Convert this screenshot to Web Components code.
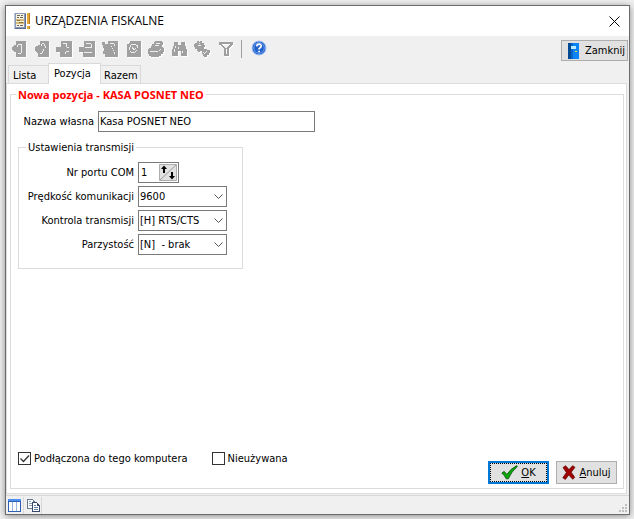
<!DOCTYPE html>
<html lang="pl">
<head>
<meta charset="utf-8">
<title>Urządzenia fiskalne</title>
<style>
html {
  background: #f1f1f1;
}
body {
  display: flex;
  min-height: 100vh;
  box-sizing: border-box;
  margin: 0;
  padding: 5px 4px 4px 5px;
  font: 11px/13px "DejaVu Sans Condensed", "DejaVu Sans", sans-serif;
  color: #000;
}
</style>
</head>
<body>
<fiscal-window heading="URZĄDZENIA FISKALNE">
  <tool-bar slot="tools"></tool-bar>
  <tab-pages slot="main" tabs="Lista,Pozycja,Razem" active="1">
    <group-box heading="Nowa pozycja - KASA POSNET NEO" main>
      <text-field label="Nazwa własna" value="Kasa POSNET NEO"></text-field>
      <group-box heading="Ustawienia transmisji">
        <spin-field label="Nr portu COM" value="1"></spin-field>
        <combo-field label="Prędkość komunikacji" value="9600"></combo-field>
        <combo-field label="Kontrola transmisji" value="[H] RTS/CTS"></combo-field>
        <combo-field label="Parzystość" value="[N]&nbsp; - brak"></combo-field>
      </group-box>
      <form-footer>
        <check-field label="Podłączona do tego komputera" checked></check-field>
        <check-field label="Nieużywana"></check-field>
        <push-button slot="actions" icon="ok" primary><u>O</u>K</push-button>
        <push-button slot="actions" icon="cancel"><u>A</u>nuluj</push-button>
      </form-footer>
    </group-box>
  </tab-pages>
  <status-bar slot="status"></status-bar>
</fiscal-window>

<script>
const icons = {
  app: `<svg width="17" height="16" viewBox="0 0 17 16" shape-rendering="crispEdges">
    <path fill="#8a9ab8" d="M0 0h12v16H0z"/><path fill="#b9c5d8" d="M0 0h1v16H0z"/><path fill="#5c6c8c" d="M11 1h1v15H1v-1h10z"/>
    <path fill="#f6f1e0" d="M2 1h8v13H2z"/>
    <path fill="#6b6658" d="M3 2h3v1H3zM7 2h2v1H7zM3 4h2v1H3zM6 4h3v1H6zM3 12h2v1H3zM6 12h3v1H6z"/>
    <path fill="#d3bd7c" d="M2 6h8v2H2zM2 9h8v2H2z"/><path fill="#8b7433" d="M3 7h3v1H3zM5 9h4v1H5z"/>
    <path fill="#e8ab3a" d="M13 0h3v11h-3zM13 13h3v3h-3z"/><path fill="#b97c1e" d="M15 0h1v11h-1zM15 13h1v3h-1z"/></svg>`,
  first: `<path d="M6 1h10v16H6v-5H4v-1H3v-1H2V7h1V6h1V5h2z"/><path class="cut" d="M8 4h4v1H8zM11 5h1v8h-1zM8 13h3v1H8zM7 5h1v2H7z"/>`,
  prior: `<path d="M7 1h9v16H5v-4H4v-1H3v-1H2V7h1V6h2V5h2z"/><path class="cut" d="M9 3h2v1H9zM11 4h1v2h-1zM12 6h1v2h-1zM8 4h1v2H8zM10 9h1v2h-1zM9 11h1v2H9zM7 13h2v1H7z"/>`,
  add: `<path d="M5 1h11v16H4v-5H0V7h5z"/><path class="cut" d="M7 3h4v1H7zM10 4h1v3h-1zM11 7h2v1h-2zM10 11h3v1h-3zM9 12h1v2H9z"/>`,
  remove: `<path d="M5 1h11v16H4v-5H0V7h5z"/><path class="cut" d="M7 3h5v1H7zM12 4h1v3h-1zM6 7h7v1H6zM5 12h8v1H5z"/>`,
  edit: `<path d="M6 1h10v16H3v-3H1v-3h1V8H1V5H0V2h3v2h3z"/><path class="cut" d="M8 3h4v1H8zM12 4h1v2h-1zM9 6h1v1H9zM10 8h1v1h-1zM11 10h1v1h-1zM12 12h1v2h-1z"/>`,
  refresh: `<path d="M5 1h11v16H2V4h2V3h1z"/><path class="cut" d="M6 4h5v1H6zM11 5h2v3h-1V6h-1zM5 5h1v2H5zM4 7h1v3H4zM5 11h1v1H5zM6 12h4v1H6zM10 11h1v1h-1zM11 10h1v1h-1zM7 7h1v1h1v1h1V8h1v1h-1v1H8V9H7z"/>`,
  print: `<path d="M7 1h7v1h1v3h-1v2h1v1h1v4h-1v2h-2v2h-2v1H3v-1H1v-2H0V9h1V8h2V6h1V4h2V2h1z"/><path class="cut" d="M8 3h4v1H8zM7 5h4v1H7zM2 11h8v1H2zM11 10h1v1h-1zM12 9h1v1h-1z"/>`,
  find: `<path d="M3 2h4v3h3V2h4v4h1v3h1v7h-6v-5H7v5H1V9h1V6h1z"/><path class="cut" d="M4 6h1v2H4zM3 9h1v3H3zM7 7h1v2H7zM11 11h1v2h-1z"/>`,
  options: `<path d="M3 1h2v1h1V1h2v2h2v2h1v2h-1v2h3v1h3v3h-1v2h-2v2h-3v-1H9v-2H8v-3H6v1H4v-1H3V9H1V7H0V4h1V3h2z"/><path class="cut" d="M5 3h1v1H5zM4 5h3v1H4zM9 12h1v1H9zM10 13h1v1h-1zM11 12h1v1h-1zM12 11h1v1h-1z"/>`,
  filter: `<path d="M2 2h14v3h-1v1h-1v1h-1v1h-1v8H7V8H6V7H5V6H4V5H2zM5 4v1h1v1h1v1h1v1h2V7h1V6h1V5h1V4zM9 9v5h1V9z" fill-rule="evenodd"/>`,
  help: `<svg width="16" height="16" viewBox="0 0 16 16"><circle cx="8" cy="8" r="7" fill="#2462cc" stroke="#a9c5f3"/>
    <circle cx="8" cy="8" r="5.3" fill="none" stroke="#6c9ceb"/><path d="M5.8 6.3Q6 4.2 8.1 4.2 10.3 4.3 10.2 6.2 10.1 7.2 8.1 8.6V9.6" fill="none" stroke="#fff" stroke-width="1.7"/><path fill="#fff" d="M7.2 10.7h1.8v1.6H7.2z"/></svg>`,
  door: `<svg width="11" height="16" viewBox="0 0 11 16" shape-rendering="crispEdges"><path fill="#004a94" d="M0 0h3v16H0z"/><path fill="#0068c8" d="M3 0h2v16H3z"/><path fill="#0a84f6" d="M5 0h6v16H5z"/><path fill="#b8ecff" d="M3 3h5v3H3z"/><path fill="#ffe34d" d="M7 8h2v1H7z"/></svg>`,
  ok: `<svg width="17" height="15" viewBox="0 0 17 15"><path fill="#08a808" stroke="#064f06" stroke-width=".8" d="M.8 8 3.2 6.4 6 9.4Q9.5 3.8 15.8.6L16.3 1.6Q10.5 6.5 7.3 13.8H5.2Q3.8 10.6.8 8z"/></svg>`,
  cancel: `<svg width="14" height="15" viewBox="0 0 14 15"><path fill="#a00000" stroke="#5d0000" stroke-width=".7" d="M1 2.6 3.6.7 7 4.6 10.6.7 13 2.3 9.2 7.2 12.7 12.3 10.8 14.3 6.7 10 3.4 14.4.8 12.8 4.4 7.5z"/></svg>`,
  table: `<svg width="13" height="13" viewBox="0 0 13 13" shape-rendering="crispEdges"><path fill="#2f5fb3" d="M0 0h13v13H0z"/><path fill="#4f8ff0" d="M0 0h13v2H0z"/><path fill="#fff" d="M1 3h11v9H1z"/><path fill="#9ab4dc" d="M4 3h1v9H4zM8 3h1v9H8z"/></svg>`,
  copy: `<svg width="13" height="13" viewBox="0 0 13 13" shape-rendering="crispEdges"><path fill="#66788f" d="M0 0h6v1h1v1h1v8H0z"/><path fill="#fff" d="M1 1h5v8H1z"/><path fill="#8ea1ba" d="M2 2h2v1H2zM2 4h3v1H2zM2 6h3v1H2z"/><path fill="#34496b" d="M5 3h5v1h1v1h1v1h1v7H5z"/><path fill="#fff" d="M6 4h4v3h2v5H6z"/><path fill="#637ba0" d="M7 6h2v1H7zM7 8h4v1H7zM7 10h4v1H7z"/></svg>`,
};

const base = `<style>
:host, * { box-sizing: border-box; }
input, button, select { font: inherit; color: inherit; margin: 0; border-radius: 0; }
svg { display: block; flex: none; }
</style>`;

// shared helper: opens the shadow root and fills it from a template
class BaseElement extends HTMLElement {
  constructor() {
    super();
    this.attachShadow({ mode: 'open' });
  }

  connectedCallback() {
    const template = document.createElement('template');
    template.innerHTML = base + this.render();
    this.shadowRoot.replaceChildren(template.content.cloneNode(true));
  }

  attr(name) {
    return this.getAttribute(name) || '';
  }
}

class FiscalWindow extends BaseElement {
  render() {
    return `
<style>
:host { display: flex; flex-direction: column; flex: 1; min-width: 0; background: #f0f0f0; border: 1px solid #6b6b6b; box-shadow: 0 1px 7px #888; }
header { display: flex; align-items: center; gap: 4px; height: 30px; padding: 0 9px 0 8px; background: #fff; }
h1 { flex: 1; margin: 0; font: 12px/16px "Open Sans", sans-serif; }
button { padding: 0; border: 0; background: none; }
slot[name=main] { display: flex; flex: 1; }
</style>
<header>
  ${icons.app}
  <h1>${this.attr('heading')}</h1>
  <button aria-label="Zamknij okno"><svg width="11" height="11" viewBox="0 0 11 11"><path d="M.5.5l10 10M10.5.5l-10 10" stroke="#000"/></svg></button>
</header>
<slot name="tools"></slot>
<slot name="main"></slot>
<slot name="status"></slot>`;
  }
}

class ToolBar extends BaseElement {
  render() {
    const names = ['first', 'prior', 'add', 'remove', 'edit', 'refresh', 'print', 'find', 'options', 'filter'];
    return `
<style>
:host { display: flex; align-items: flex-start; height: 27px; padding: 4px 1px 0 4px; }
.tool { padding: 0; border: 0; background: none; display: block; }
.tools { display: flex; gap: 7px; }
.tool svg { fill: #a0a0a0; }
.tools .cut { fill: #f0f0f0; }
.tools svg { filter: drop-shadow(1px 1px 0 #fff); }
.line { width: 1px; height: 18px; margin: 0 9px 0 8px; background: #a0a0a0; }
push-button { margin-left: auto; }
</style>
<div class="tools">${names.map((n) => `<button class="tool" disabled aria-label="${n}"><svg width="16" height="17" viewBox="0 0 16 17" shape-rendering="crispEdges">${icons[n]}</svg></button>`).join('')}</div>
<div class="line"></div>
<button class="tool" aria-label="Pomoc">${icons.help}</button>
<push-button icon="door" wide>Zamknij</push-button>`;
  }
}

class TabPages extends BaseElement {
  render() {
    const tabs = this.attr('tabs').split(',');
    return `
<style>
:host { display: flex; flex-direction: column; flex: 1; min-width: 0; margin-right: 2px; }
nav { display: flex; align-items: flex-end; height: 20px; padding-left: 2px; }
button { width: 40px; height: 18px; padding: 1px 4px 0; border: 1px solid #d9d9d9; border-bottom: 0; background: #f0f0f0; text-align: left; white-space: nowrap; }
button:first-child { border-right: 0; }
button:last-child { padding-left: 3px; border-left: 0; }
.active { width: 53px; height: 21px; margin-bottom: -1px; padding: 0 5px 2px; background: #fff; z-index: 1; }
section { display: flex; flex: 1; padding: 4px 2px 4px 3px; background: #fff; border: 1px solid #dcdcdc; }
slot { display: flex; flex: 1; min-width: 0; }
</style>
<nav role="tablist">${tabs.map((t, i) => `<button role="tab"${i === Number(this.attr('active')) ? ' class="active" aria-selected="true"' : ''}>${t}</button>`).join('')}</nav>
<section role="tabpanel"><slot></slot></section>`;
  }
}

class GroupBox extends BaseElement {
  render() {
    return `
<style>
:host { display: block; width: 225px; margin-top: 9px; }
fieldset { display: flex; flex-direction: column; gap: 3px; min-width: 0; height: 100%; margin: 0; padding: 8px 8px 13px; border: 1px solid #dcdcdc; }
legend { margin-left: -1px; padding: 0 2px; }
:host([main]) { flex: 1; width: auto; min-width: 0; margin: 0; }
:host([main]) fieldset { padding: 10px 6px 4px 7px; gap: 0; }
:host([main]) legend { margin-left: -2px; color: #f00; font-family: "Noto Sans", sans-serif; font-weight: bold; }
</style>
<fieldset><legend>${this.attr('heading')}</legend><slot></slot></fieldset>`;
  }
}

const fieldStyle = `<style>
:host { display: flex; align-items: center; gap: 4px; }
label { width: 107px; text-align: right; white-space: nowrap; }
.box { height: 21px; border: 1px solid #7a7a7a; background: #fff; }
</style>`;

class TextField extends BaseElement {
  render() {
    return `${fieldStyle}
<style>
label { width: 76px; }
input { width: 217px; padding: 0 1px; }
</style>
<label for="f">${this.attr('label')}</label><input id="f" class="box" value="${this.attr('value')}">`;
  }
}

class SpinField extends BaseElement {
  render() {
    return `${fieldStyle}
<style>
.box { display: flex; width: 41px; padding: 1px; }
input { flex: 1; min-width: 0; padding: 0 1px; border: 0; outline: 0; }
button { padding: 0; border: 0; }
</style>
<label for="f">${this.attr('label')}</label>
<div class="box"><input id="f" inputmode="numeric" value="${this.attr('value')}"><button aria-label="Zmień"><svg width="18" height="17" viewBox="0 0 18 17"><path fill="#e1e1e1" stroke="#adadad" d="M.5.5h17v16H.5z"/><path stroke="#999" d="M1 16 17 1"/><path d="M5 1.5 8 5H6v4H4V5H2zM13 15.5 16 12h-2V8h-2v4h-2z"/></svg></button></div>`;
  }
}

class ComboField extends BaseElement {
  render() {
    return `${fieldStyle}
<style>
.wrap { display: grid; width: 89px; align-items: center; }
.wrap > * { grid-area: 1 / 1; }
select { appearance: none; width: 100%; padding: 0 1px; }
svg { justify-self: end; margin-right: 4px; pointer-events: none; }
</style>
<label for="f">${this.attr('label')}</label>
<div class="wrap"><select id="f" class="box"><option>${this.attr('value')}</option></select>
<svg width="9" height="6" viewBox="0 0 9 6"><path d="M.5.5l4 4 4-4" fill="none" stroke="#555"/></svg></div>`;
  }
}

class CheckField extends BaseElement {
  render() {
    return `
<style>
:host { display: block; }
label { display: flex; align-items: center; gap: 3px; white-space: nowrap; }
span { display: grid; }
span > * { grid-area: 1 / 1; }
input { appearance: none; width: 13px; height: 13px; border: 1px solid #333; background: #fff; }
svg { display: none; pointer-events: none; }
input:checked + svg { display: block; }
</style>
<label><span><input type="checkbox"${this.hasAttribute('checked') ? ' checked' : ''}><svg width="13" height="13" viewBox="0 0 13 13"><path d="M2.5 6.5l3 3 5.5-6" fill="none" stroke="#333" stroke-width="1.3"/></svg></span>${this.attr('label')}</label>`;
  }
}

class PushButton extends BaseElement {
  render() {
    return `
<style>
:host { display: block; }
button { display: flex; align-items: center; justify-content: center; gap: 3px; width: 61px; height: 23px; padding: 0; border: 1px solid #adadad; background: #e1e1e1; white-space: nowrap; }
:host([wide]) button { width: 67px; height: 21px; gap: 6px; padding-left: 4px; }
:host([primary]) button { border: 2px solid #0078d7; outline: 1px dotted #000; outline-offset: -3px; }
</style>
<button>${icons[this.attr('icon')]}<span><slot></slot></span></button>`;
  }
}

class FormFooter extends BaseElement {
  render() {
    return `
<style>
:host { display: flex; align-items: flex-end; margin-top: auto; }
.checks { display: flex; gap: 24px; padding-bottom: 19px; }
.actions { display: flex; gap: 7px; margin-left: auto; }
</style>
<div class="checks"><slot></slot></div>
<div class="actions"><slot name="actions"></slot></div>`;
  }
}

class StatusBar extends BaseElement {
  render() {
    return `
<style>
:host { display: flex; height: 19px; margin-top: 1px; padding-left: 2px; border-top: 1px solid #d7d7d7; }
button { display: flex; align-items: center; margin: 1px 0 0; padding: 0 2px 0 0; border: 0; border-right: 1px solid #d7d7d7; background: none; height: 17px; }
button + button { padding: 0 1px 0 3px; }
.grip { margin: auto 2px 2px auto; }
</style>
<button aria-label="Tabela">${icons.table}</button>
<button aria-label="Kopiuj">${icons.copy}</button>
<svg class="grip" width="8" height="8" viewBox="0 0 8 8" fill="#bfbfbf"><path d="M6 0h2v2H6zM3 3h2v2H3zM6 3h2v2H6zM0 6h2v2H0zM3 6h2v2H3zM6 6h2v2H6z"/></svg>`;
  }
}

customElements.define('fiscal-window', FiscalWindow);
customElements.define('tool-bar', ToolBar);
customElements.define('tab-pages', TabPages);
customElements.define('group-box', GroupBox);
customElements.define('text-field', TextField);
customElements.define('spin-field', SpinField);
customElements.define('combo-field', ComboField);
customElements.define('check-field', CheckField);
customElements.define('push-button', PushButton);
customElements.define('form-footer', FormFooter);
customElements.define('status-bar', StatusBar);
</script>
</body>
</html>
